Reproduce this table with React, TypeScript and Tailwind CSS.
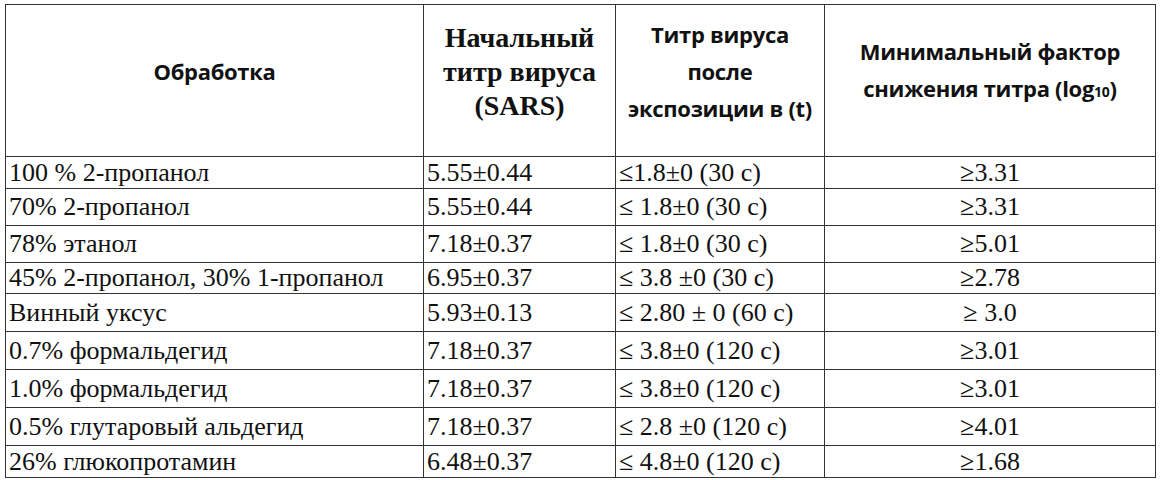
const rows = [
  { name: "100 % 2-пропанол", start: "5.55±0.44", after: "≤1.8±0 (30 с)", factor: "≥3.31" },
  { name: "70% 2-пропанол", start: "5.55±0.44", after: "≤ 1.8±0 (30 с)", factor: "≥3.31" },
  { name: "78% этанол", start: "7.18±0.37", after: "≤ 1.8±0 (30 с)", factor: "≥5.01" },
  { name: "45% 2-пропанол, 30% 1-пропанол", start: "6.95±0.37", after: "≤ 3.8 ±0 (30 с)", factor: "≥2.78" },
  { name: "Винный уксус", start: "5.93±0.13", after: "≤ 2.80 ± 0 (60 с)", factor: "≥ 3.0" },
  { name: "0.7% формальдегид", start: "7.18±0.37", after: "≤ 3.8±0 (120 с)", factor: "≥3.01" },
  { name: "1.0% формальдегид", start: "7.18±0.37", after: "≤ 3.8±0 (120 с)", factor: "≥3.01" },
  { name: "0.5% глутаровый альдегид", start: "7.18±0.37", after: "≤ 2.8 ±0 (120 с)", factor: "≥4.01" },
  { name: "26% глюкопротамин", start: "6.48±0.37", after: "≤ 4.8±0 (120 с)", factor: "≥1.68" },
];

const cell = "border-r border-b border-[#333] flex items-center";
const head = `${cell} justify-center text-center pb-[18px] font-bold text-[#111]`;
const sans = "font-['Open_Sans',sans-serif] text-[22px] leading-[37px] tracking-[-0.3px]";
const body = `${cell} px-[3px] font-['Liberation_Serif',serif] text-[26px] leading-none text-[#111]`;

const App = () => {
  return (
    <div className="w-[1161px] h-[480px] bg-white overflow-hidden">
      <div className="ml-[5px] mt-[4px] w-[1151px] grid grid-cols-[418px_192px_209px_331px] grid-rows-[152px_32px_37px_37px_31px_38px_38px_38px_38px_32px] border-l border-t border-[#333]">
        <div className={`${head} ${sans}`}>
          <div>Обработка</div>
        </div>
        <div className={`${head} font-['Liberation_Serif',serif] text-[28px] leading-[34px]`}>
          <div>
            Начальный
            <br />
            титр вируса
            <br />
            (SARS)
          </div>
        </div>
        <div className={`${head} ${sans}`}>
          <div>
            Титр вируса
            <br />
            после
            <br />
            экспозиции в (t)
          </div>
        </div>
        <div className={`${head} ${sans}`}>
          <div>
            Минимальный фактор
            <br />
            снижения титра (log<span className="text-[14px]">10</span>)
          </div>
        </div>

        {rows.map((r) => (
          <div key={r.name} className="contents">
            <div className={body}>{r.name}</div>
            <div className={body}>{r.start}</div>
            <div className={body}>{r.after}</div>
            <div className={`${body} justify-center`}>{r.factor}</div>
          </div>
        ))}
      </div>
    </div>
  );
};

export default App;
